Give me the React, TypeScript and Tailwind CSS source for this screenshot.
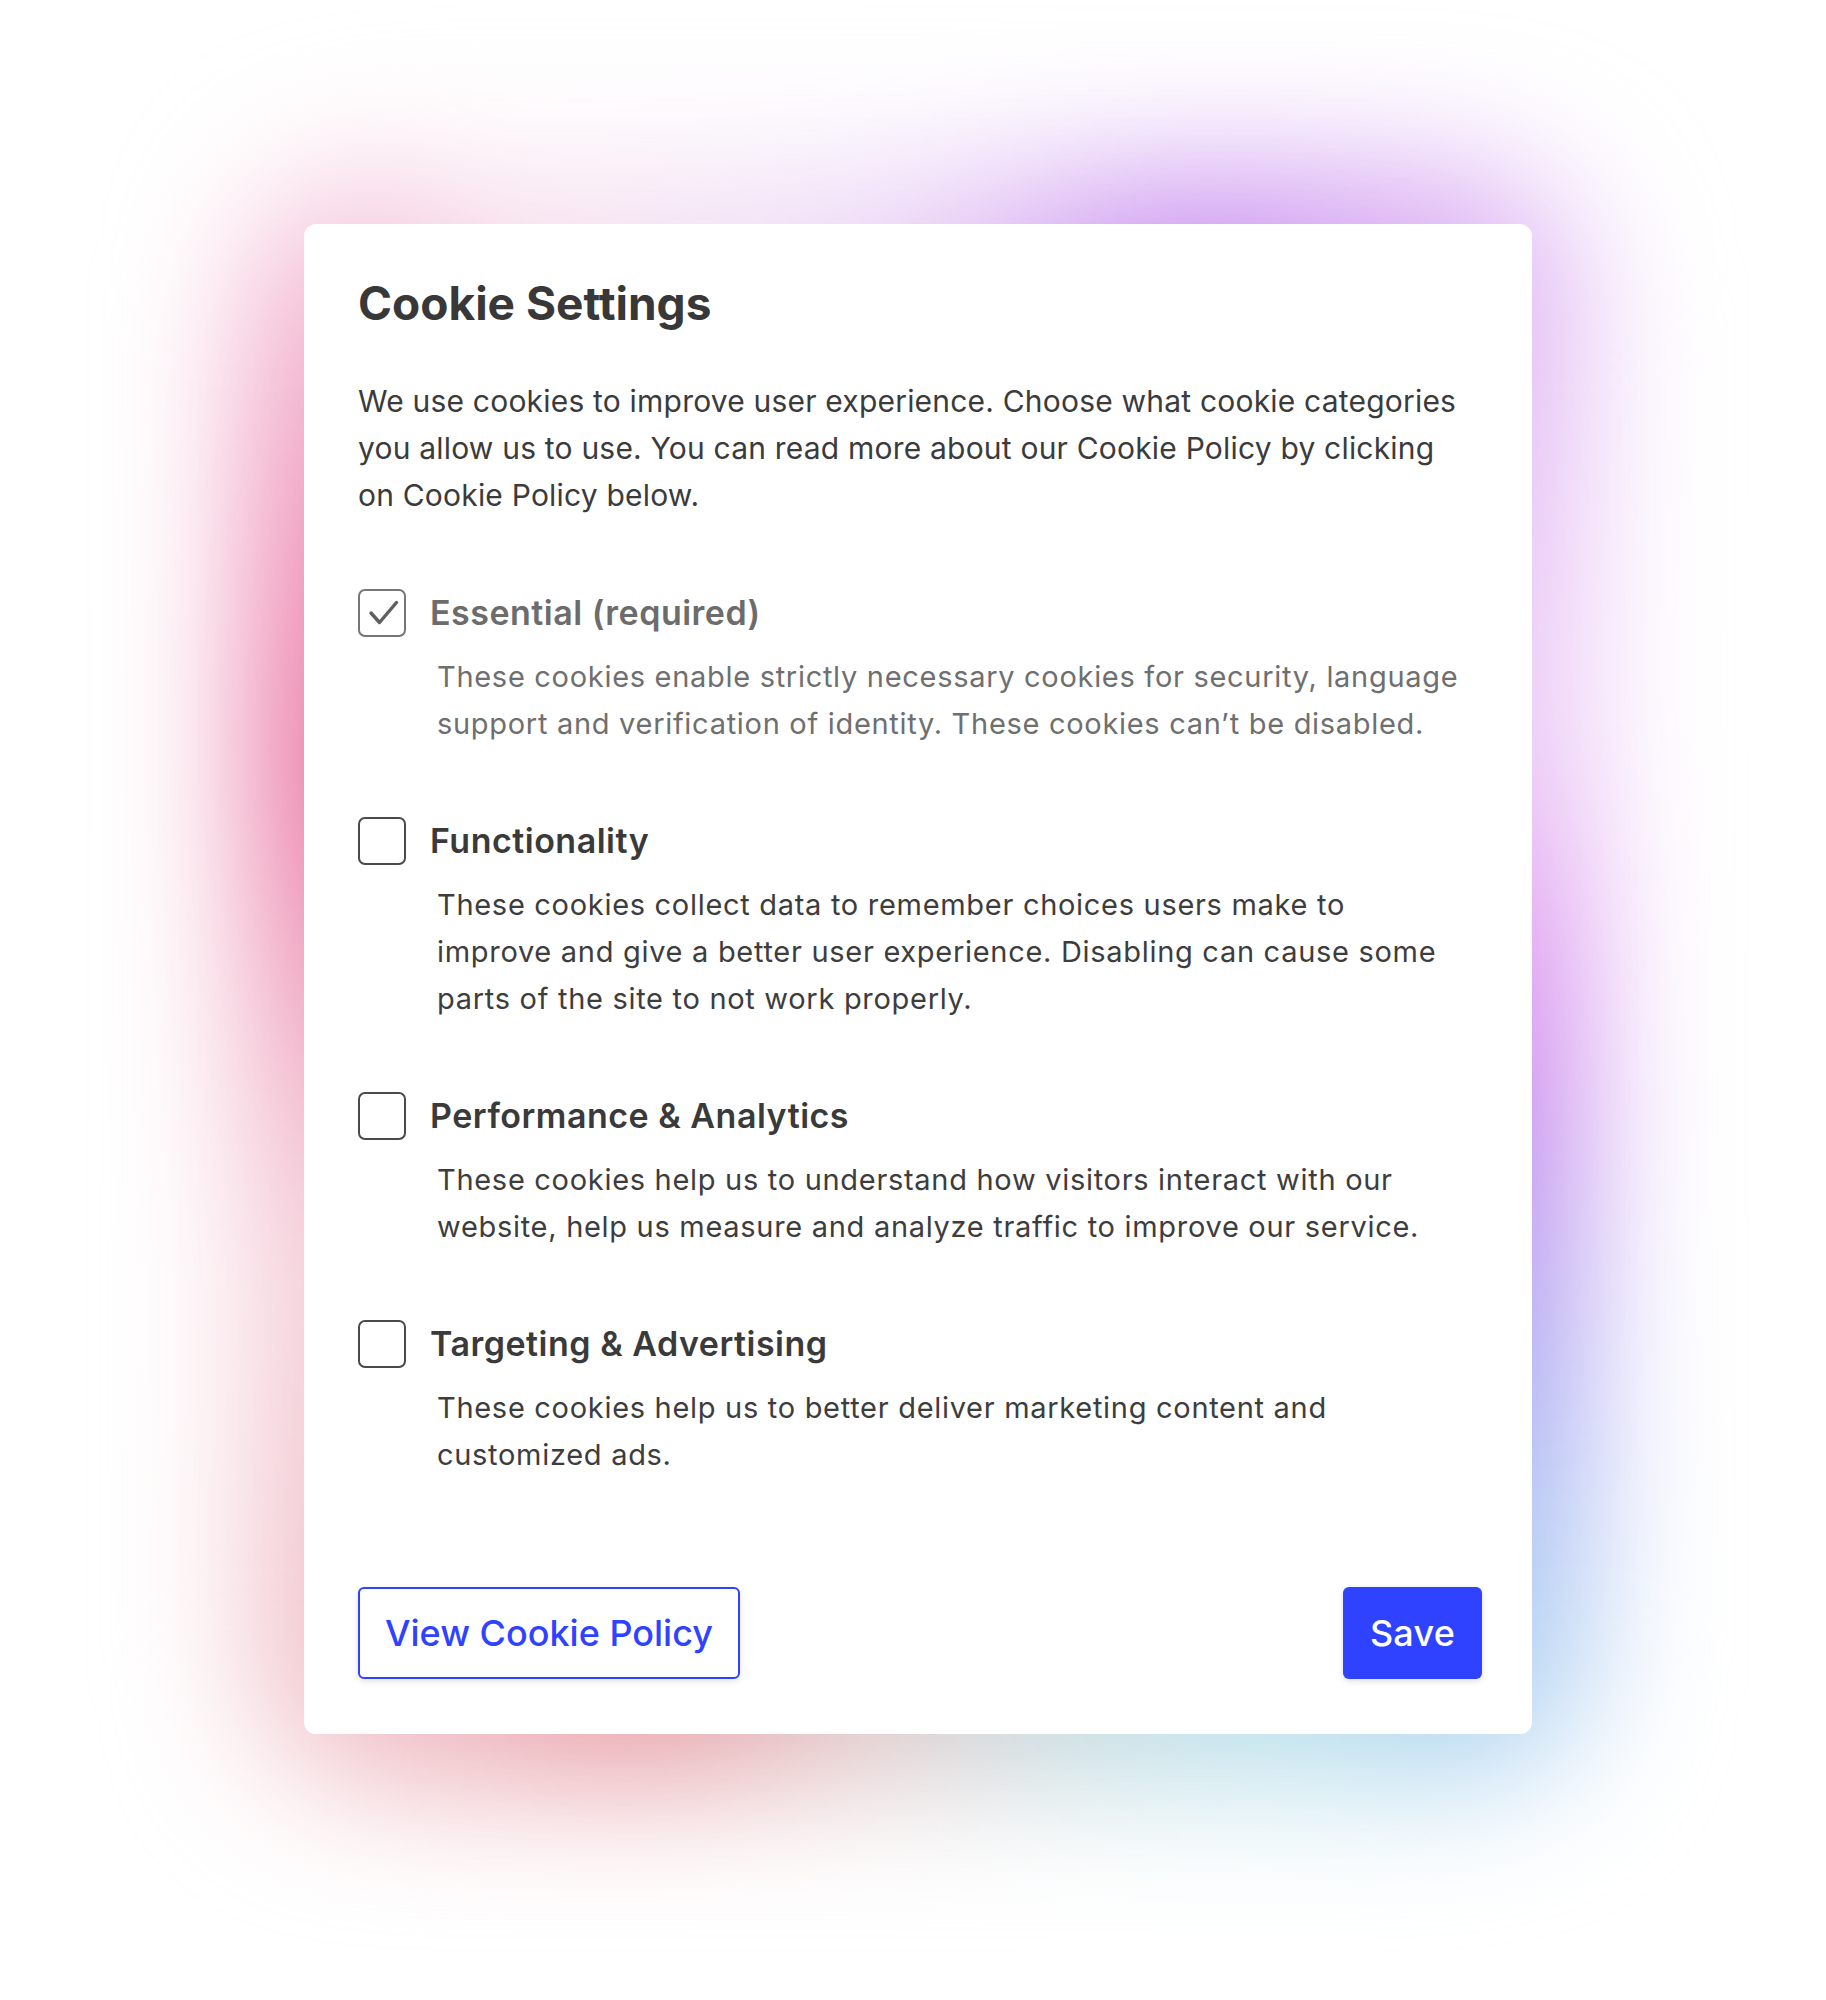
import React from "react";

interface ICategory {
  title: string;
  lines: string[];
  checked?: boolean;
  muted?: boolean;
}

const categories: ICategory[] = [
  {
    title: "Essential (required)",
    lines: [
      "These cookies enable strictly necessary cookies for security, language",
      "support and verification of identity. These cookies can\u2019t be disabled.",
    ],
    checked: true,
    muted: true,
  },
  {
    title: "Functionality",
    lines: [
      "These cookies collect data to remember choices users make to",
      "improve and give a better user experience. Disabling can cause some",
      "parts of the site to not work properly.",
    ],
  },
  {
    title: "Performance & Analytics",
    lines: [
      "These cookies help us to understand how visitors interact with our",
      "website, help us measure and analyze traffic to improve our service.",
    ],
  },
  {
    title: "Targeting & Advertising",
    lines: [
      "These cookies help us to better deliver marketing content and",
      "customized ads.",
    ],
  },
];

const Checkbox = ({ checked, muted }: { checked?: boolean; muted?: boolean }) => (
  <svg width="48" height="48" viewBox="0 0 48 48" className="shrink-0">
    <rect
      x="1"
      y="1"
      width="46"
      height="46"
      rx="6"
      fill="white"
      stroke={muted ? "#767676" : "#4a4a4a"}
      strokeWidth="2"
    />
    {checked && (
      <polyline
        points="13,24 21.5,33.5 38.5,13.5"
        fill="none"
        stroke="#5f5f5f"
        strokeWidth="3.4"
        strokeLinecap="round"
        strokeLinejoin="round"
      />
    )}
  </svg>
);

const Category = ({ item }: { item: ICategory }) => (
  <div>
    <div className="flex items-center gap-[24px]">
      <Checkbox checked={item.checked} muted={item.muted} />
      <h3
        className={
          item.muted
            ? "text-[34px] leading-[40px] tracking-[0.5px] font-semibold text-[#6c6c6c]"
            : "text-[34px] leading-[40px] tracking-[0.5px] font-semibold text-[#3a3a3a]"
        }
      >
        {item.title}
      </h3>
    </div>
    <p
      className={
        item.muted
          ? "mt-[16px] ml-[79px] text-[29px] leading-[47px] tracking-[0.7px] text-[#6f6f6f] whitespace-nowrap"
          : "mt-[16px] ml-[79px] text-[29px] leading-[47px] tracking-[0.7px] text-[#3d3d3d] whitespace-nowrap"
      }
    >
      {item.lines.map((line, i) => (
        <span key={i} className="block">
          {line}
        </span>
      ))}
    </p>
  </div>
);

export default function App() {
  return (
    <div className="relative w-[1826px] h-[2000px] overflow-hidden bg-white font-[Inter,sans-serif]">
      <div className="pt-[224px] pl-[304px]">
        <div className="relative w-[1228px]">
          {/* coloured glow behind the card */}
          <div
            aria-hidden
            className="absolute -inset-[50px] rounded-[120px] blur-[70px] bg-[conic-gradient(from_0deg,#ead2f6_0deg,#c98ef0_20deg,#e4bdf4_45deg,#eccaf6_68deg,#dc94f0_88deg,#c98aee_102deg,#a9a8f3_124deg,#a9cdf2_138deg,#b9e0ec_152deg,#bfdde3_166deg,#e2c6c6_185deg,#e69aa2_200deg,#f0c0c8_220deg,#f4ccd8_245deg,#e9709f_290deg,#ee8fb8_310deg,#f8e2ee_330deg,#f0dcf6_350deg,#ead2f6_360deg)]"
          />
          <div className="relative bg-white rounded-xl pt-[51px] pb-[55px] pl-[54px] pr-[50px]">
            <h1 className="text-[46px] leading-[56px] font-bold text-[#383838]">
              Cookie Settings
            </h1>
            <p className="mt-[47px] text-[30px] leading-[47px] tracking-[0.2px] text-[#3b3b3b] whitespace-nowrap">
              <span className="block">
                We use cookies to improve user experience. Choose what cookie categories
              </span>
              <span className="block">
                you allow us to use. You can read more about our Cookie Policy by clicking
              </span>
              <span className="block">on Cookie Policy below.</span>
            </p>
            <div className="mt-[70px] flex flex-col gap-[70px]">
              {categories.map((c) => (
                <Category key={c.title} item={c} />
              ))}
            </div>
            <div className="mt-[109px] flex items-center justify-between">
              <button className="h-[92px] px-[25px] rounded-[6px] border-2 border-[#2f42ff] bg-white text-[#2f42ff] text-[36px] font-medium shadow-[0_2px_6px_rgba(0,0,0,0.12)]">
                View Cookie Policy
              </button>
              <button className="h-[92px] px-[27px] rounded-[6px] bg-[#2f42ff] text-white text-[36px] tracking-[0.2px] font-medium shadow-[0_2px_6px_rgba(0,0,0,0.14)]">
                Save
              </button>
            </div>
          </div>
        </div>
      </div>
    </div>
  );
}
